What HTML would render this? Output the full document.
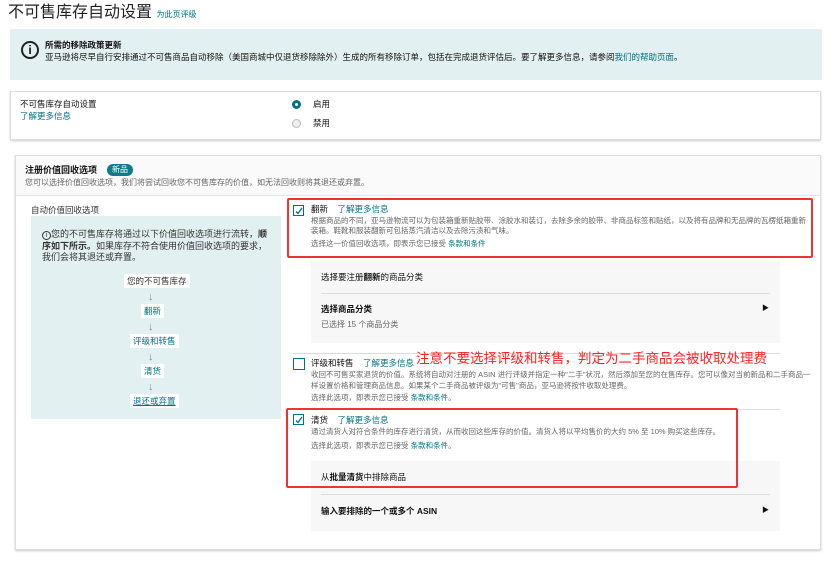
<!DOCTYPE html>
<html><head><meta charset="utf-8"><style>
*{margin:0;padding:0;box-sizing:border-box}
body{width:830px;height:562px;background:#fff;position:relative;overflow:hidden;font-family:"Liberation Sans","Noto Sans CJK SC",sans-serif;color:#111;font-size:8px}
.a{position:absolute;white-space:nowrap;line-height:1}
.l{color:#007185}
.g{color:#666}
.b{font-weight:bold}
.cb{position:absolute;width:11px;height:11px;border:1px solid #007185;background:#fff}
.cb svg{position:absolute;left:1px;top:1px}
.red{position:absolute;border:2px solid #e33;border-radius:2px}
.fl{position:absolute;background:#fff;color:#007185;font-size:8.5px;line-height:14px;text-align:center;padding:0 3px}
.ar{position:absolute;left:148px;font-size:11px;color:#888;line-height:1}
</style></head><body>
<div class="a" style="left:8px;top:5px;font-size:16px;color:#222">不可售库存自动设置 <span class="l" style="font-size:8px">为此页评级</span></div>

<div style="position:absolute;left:10px;top:29px;width:812px;height:51px;background:#e3f0f1"></div>
<div style="position:absolute;left:21px;top:41px;width:18px;height:18px;border:2px solid #222;border-radius:50%;text-align:center;font-size:12px;font-weight:bold;line-height:14px">i</div>
<div class="a b" style="left:45px;top:41px;font-size:8.5px">所需的移除政策更新</div>
<div class="a" style="left:45px;top:53px;font-size:8.5px">亚马逊将尽早自行安排通过不可售商品自动移除（美国商城中仅退货移除除外）生成的所有移除订单，包括在完成退货评估后。要了解更多信息，请参阅<span class="l">我们的帮助页面</span>。</div>

<div style="position:absolute;left:10px;top:91px;width:811px;height:49px;border:1px solid #ddd;box-shadow:0 1px 2px #ccc"></div>
<div class="a" style="left:20px;top:100px;font-size:8.5px">不可售库存自动设置</div>
<div class="a l" style="left:20px;top:112px;font-size:8.5px">了解更多信息</div>
<div style="position:absolute;left:292px;top:100px;width:9px;height:9px;border:3px solid #007185;border-radius:50%"></div>
<div class="a" style="left:313px;top:100px;font-size:8.5px">启用</div>
<div style="position:absolute;left:292px;top:119px;width:9px;height:9px;border:1px solid #bbb;border-radius:50%;background:#eee"></div>
<div class="a" style="left:313px;top:119px;font-size:8.5px">禁用</div>

<div style="position:absolute;left:15px;top:155px;width:806px;height:395px;border:1px solid #ddd;box-shadow:0 1px 2px #ccc"></div>
<div style="position:absolute;left:16px;top:156px;width:804px;height:40px;background:#fafafa;border-bottom:1px solid #e3e3e3"></div>
<div class="a b" style="left:25px;top:166px;font-size:9px">注册价值回收选项</div>
<div class="a" style="left:107px;top:164px;width:26px;height:12px;border-radius:6px;background:#0f7c8c;color:#fff;font-size:8px;line-height:12px;text-align:center">新品</div>
<div class="a g" style="left:25px;top:179px;font-size:8px">您可以选择价值回收选项，我们将尝试回收您不可售库存的价值，如无法回收则将其退还或弃置。</div>

<div class="a" style="left:31px;top:206px;font-size:8.5px;color:#333">自动价值回收选项</div>
<div style="position:absolute;left:31px;top:216px;width:250px;height:203px;background:#e3f0f1"></div>
<div style="position:absolute;left:42px;top:229px;width:232px;font-size:9px;line-height:11.5px;color:#333"><span style="display:inline-block;width:9px;height:9px;border:1px solid #333;border-radius:50%;font-size:7px;line-height:8px;text-align:center">i</span>您的不可售库存将通过以下价值回收选项进行流转，<b>顺序如下所示。</b>如果库存不符合使用价值回收选项的要求，我们会将其退还或弃置。</div>
<div class="fl" style="left:124px;top:274px;color:#333">您的不可售库存</div>
<div class="ar" style="top:292px">↓</div>
<div class="fl" style="left:141px;top:304px">翻新</div>
<div class="ar" style="top:322px">↓</div>
<div class="fl" style="left:130px;top:334px">评级和转售</div>
<div class="ar" style="top:352px">↓</div>
<div class="fl" style="left:141px;top:364px">清货</div>
<div class="ar" style="top:382px">↓</div>
<div class="fl" style="left:130px;top:394px;text-decoration:underline">退还或弃置</div>

<!-- 翻新 -->
<div class="cb" style="left:293px;top:205px"><svg width="8" height="8"><path d="M1 4.5 L3 6.5 L7 1" stroke="#007185" stroke-width="1.3" fill="none"/></svg></div>
<div class="a" style="left:311px;top:205px;font-size:8.5px">翻新 &nbsp;&nbsp;&nbsp;<span class="l">了解更多信息</span></div>
<div style="position:absolute;left:311px;top:216px;width:500px;font-size:7.5px;line-height:10px;color:#666">根据商品的不同，亚马逊物流可以为包装箱重新贴胶带、涂胶水和装订，去除多余的胶带、非商品标签和贴纸，以及将有品牌和无品牌的瓦楞纸箱重新装箱。鞋靴和服装翻新可包括蒸汽清洁以及去除污渍和气味。</div>
<div class="a g" style="left:311px;top:240px;font-size:7.5px">选择这一价值回收选项，即表示您已接受 <span class="l">条款和条件</span></div>
<div class="red" style="left:287px;top:198px;width:526px;height:60px"></div>

<div style="position:absolute;left:311px;top:261px;width:469px;height:82px;background:#f7f7f7"></div>
<div class="a" style="left:321px;top:273px;font-size:8.5px">选择要注册<b>翻新</b>的商品分类</div>
<div style="position:absolute;left:321px;top:293px;width:449px;height:1px;background:#ddd"></div>
<div class="a b" style="left:321px;top:305px;font-size:8.5px">选择商品分类</div>
<div class="a" style="left:762px;top:305px;font-size:7px">▶</div>
<div class="a g" style="left:321px;top:321px;font-size:8px">已选择 15 个商品分类</div>

<div style="position:absolute;left:293px;top:353px;width:487px;height:1px;background:#ddd"></div>
<div class="cb" style="left:293px;top:358px;width:12px;height:12px"></div>
<div class="a" style="left:311px;top:359px;font-size:8.5px">评级和转售 &nbsp;&nbsp;&nbsp;<span class="l">了解更多信息</span></div>
<div class="a" style="left:416px;top:352px;font-size:13.5px;color:#f22">注意不要选择评级和转售，判定为二手商品会被收取处理费</div>
<div style="position:absolute;left:311px;top:370px;width:500px;font-size:7.5px;line-height:10.5px;color:#666">收回不可售买家退货的价值。系统将自动对注册的 ASIN 进行评级并指定一种"二手"状况，然后添加至您的在售库存。您可以像对当前新品和二手商品一样设置价格和管理商品信息。如果某个二手商品被评级为"可售"商品，亚马逊将按件收取处理费。</div>
<div class="a g" style="left:311px;top:394px;font-size:7.5px">选择此选项，即表示您已接受 <span class="l">条款和条件</span>。</div>
<div style="position:absolute;left:293px;top:409px;width:487px;height:1px;background:#ddd"></div>

<!-- 清货 -->
<div class="cb" style="left:293px;top:414px"><svg width="8" height="8"><path d="M1 4.5 L3 6.5 L7 1" stroke="#007185" stroke-width="1.3" fill="none"/></svg></div>
<div class="a" style="left:311px;top:416px;font-size:8.5px">清货 &nbsp;&nbsp;&nbsp;<span class="l">了解更多信息</span></div>
<div class="a g" style="left:311px;top:428px;font-size:7.5px">通过清货人对符合条件的库存进行清货，从而收回这些库存的价值。清货人将以平均售价的大约 5% 至 10% 购买这些库存。</div>
<div class="a g" style="left:311px;top:442px;font-size:7.5px">选择此选项，即表示您已接受 <span class="l">条款和条件</span>。</div>
<div style="position:absolute;left:311px;top:461px;width:469px;height:70px;background:#f7f7f7"></div>
<div class="a" style="left:321px;top:473px;font-size:8.5px">从<b>批量清货</b>中排除商品</div>
<div style="position:absolute;left:321px;top:494px;width:449px;height:1px;background:#ddd"></div>
<div class="a b" style="left:321px;top:507px;font-size:8.5px">输入要排除的一个或多个 ASIN</div>
<div class="a" style="left:762px;top:507px;font-size:7px">▶</div>
<div class="red" style="left:286px;top:408px;width:452px;height:80px"></div>
</body></html>
